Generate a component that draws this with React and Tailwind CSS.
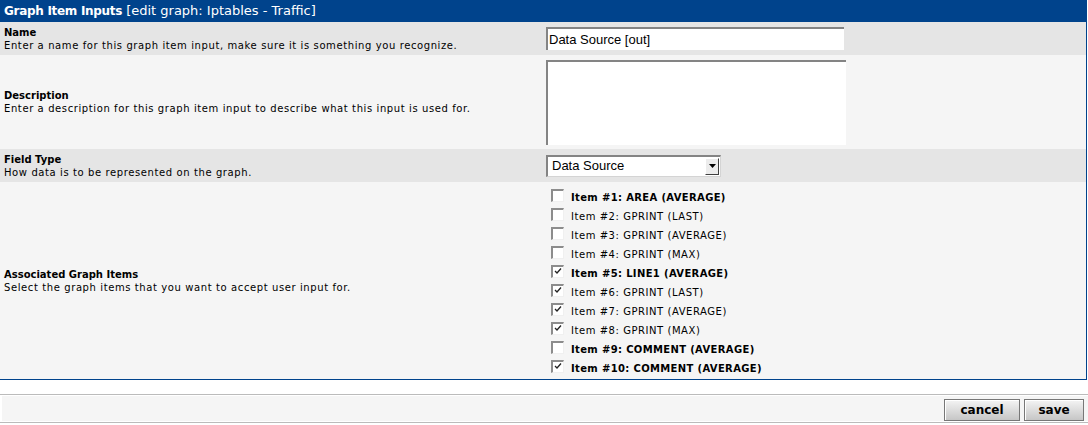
import React from 'react';

const items = [
  { label: 'Item #1: AREA (AVERAGE)', bold: true, checked: false },
  { label: 'Item #2: GPRINT (LAST)', bold: false, checked: false },
  { label: 'Item #3: GPRINT (AVERAGE)', bold: false, checked: false },
  { label: 'Item #4: GPRINT (MAX)', bold: false, checked: false },
  { label: 'Item #5: LINE1 (AVERAGE)', bold: true, checked: true },
  { label: 'Item #6: GPRINT (LAST)', bold: false, checked: true },
  { label: 'Item #7: GPRINT (AVERAGE)', bold: false, checked: true },
  { label: 'Item #8: GPRINT (MAX)', bold: false, checked: true },
  { label: 'Item #9: COMMENT (AVERAGE)', bold: true, checked: false },
  { label: 'Item #10: COMMENT (AVERAGE)', bold: true, checked: true },
];

function Label({ title, desc }) {
  return (
    <div className="pl-[4px] text-[10px] leading-[13px] text-black">
      <div className="font-bold">{title}</div>
      <div className="tracking-[0.6px]">{desc}</div>
    </div>
  );
}

function Check({ checked }) {
  return (
    <span className="relative block shrink-0 mb-[4px] w-[13px] h-[13px] bg-white border-t-2 border-l-2 border-[#8c8c8c] border-r border-b border-r-[#f0f0f0] border-b-[#f0f0f0]">
      {checked && (
        <svg className="absolute left-[1px] top-[1px]" width="8" height="7" viewBox="0 0 8 7">
          <polyline points="1,3 3,5 7,0.5" fill="none" stroke="#222" strokeWidth="1.3" />
        </svg>
      )}
    </span>
  );
}

export default function App() {
  return (
    <div className="w-[1088px] h-[425px] bg-white" style={{ fontFamily: '"DejaVu Sans", Verdana, sans-serif' }}>
      <div className="w-[1087px] border-r border-b border-[#00438C]">
        <div className="h-[22px] bg-[#00438C] flex items-center pl-[4px] text-white">
          <span className="font-bold text-[12px] tracking-[-0.3px]">Graph Item Inputs</span>
          <span className="ml-[4px] text-[13px]">[edit graph: Iptables - Traffic]</span>
        </div>

        <div className="grid grid-cols-2 h-[33px] bg-[#E5E5E5] items-center">
          <Label title="Name" desc="Enter a name for this graph item input, make sure it is something you recognize." />
          <div className="pl-[3px]">
            <div className="w-[298px] h-[23px] bg-white border-t-2 border-l-2 border-[#848484] flex items-center pl-[1px] text-[13px] text-black" style={{ fontFamily: '"Liberation Sans", Arial, sans-serif' }}>
              Data Source [out]
            </div>
          </div>
        </div>

        <div className="grid grid-cols-2 h-[94px] bg-[#F5F5F5] items-center">
          <Label title="Description" desc="Enter a description for this graph item input to describe what this input is used for." />
          <div className="pl-[3px]">
            <div className="w-[300px] h-[85px] bg-white border-t-2 border-l-2 border-[#848484]" />
          </div>
        </div>

        <div className="grid grid-cols-2 h-[33px] bg-[#E5E5E5] items-center">
          <Label title="Field Type" desc="How data is to be represented on the graph." />
          <div className="pl-[3px]">
            <div className="w-[175px] h-[22px] bg-white border-t-2 border-l-2 border-[#848484] border-r border-b border-r-[#d4d4d4] border-b-[#d4d4d4] flex items-center justify-between text-[13px] text-black" style={{ fontFamily: '"Liberation Sans", Arial, sans-serif' }}>
              <span className="pl-[4px]">Data Source</span>
              <span className="w-[14px] h-[17px] mr-[1px] bg-[#ECECEC] border border-t-white border-l-white border-r-[#404040] border-b-[#404040] flex items-center justify-center">
                <svg width="7" height="4" viewBox="0 0 7 4"><polygon points="0,0 7,0 3.5,4" fill="#000" /></svg>
              </span>
            </div>
          </div>
        </div>

        <div className="grid grid-cols-2 h-[197px] bg-[#F5F5F5] items-center">
          <Label title="Associated Graph Items" desc="Select the graph items that you want to accept user input for." />
          <div className="pl-[8px] flex flex-col pt-[4px]">
            {items.map((it) => (
              <div key={it.label} className="h-[19px] flex items-center">
                <Check checked={it.checked} />
                <span className={`ml-[7px] text-[10px] text-black ${it.bold ? 'font-bold tracking-[0.35px]' : 'tracking-[0.55px]'}`}>{it.label}</span>
              </div>
            ))}
          </div>
        </div>
      </div>

      <div className="mt-[14px] border-y border-[#BBBBBB] py-[1px] pl-[2px]">
        <div className="h-[25px] bg-[#F5F5F5] flex items-center justify-end gap-[4px] pr-[4px] pt-[2px]">
          <button className="w-[76px] h-[22px] border border-[#777] bg-gradient-to-b from-[#f4f4f4] to-[#c6c6c6] text-[12px] font-bold text-black shadow-[inset_1px_1px_0_#fff]">cancel</button>
          <button className="w-[60px] h-[22px] border border-[#777] bg-gradient-to-b from-[#f4f4f4] to-[#c6c6c6] text-[12px] font-bold text-black shadow-[inset_1px_1px_0_#fff]">save</button>
        </div>
      </div>
    </div>
  );
}
